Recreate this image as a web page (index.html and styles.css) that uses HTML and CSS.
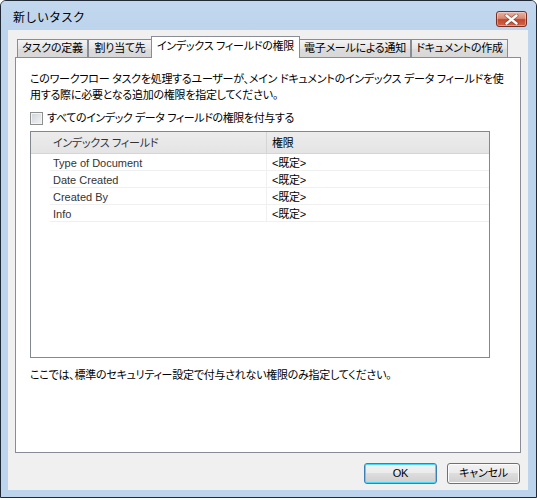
FILE: index.html
```html
<!DOCTYPE html>
<html lang="ja">
<head>
<meta charset="utf-8">
<title>新しいタスク</title>
<link rel="stylesheet" href="styles.css">
</head>
<body>
<div class="window">
  <div class="titlebar">
    <span class="title">新しいタスク</span>
    <div class="close">
      <svg width="15" height="11" viewBox="0 0 15 11">
        <path d="M2.5 1.5 L12.5 9.5 M12.5 1.5 L2.5 9.5" stroke="#6b2a1f" stroke-width="4" stroke-linecap="round" opacity="0.55"/>
        <path d="M2.5 1.5 L12.5 9.5 M12.5 1.5 L2.5 9.5" stroke="#ffffff" stroke-width="2.4" stroke-linecap="round"/>
      </svg>
    </div>
  </div>
  <div class="client">
    <div class="tabs">
      <div class="tab t1">タスクの定義</div>
      <div class="tab t2">割り当て先</div>
      <div class="tab t3 active">インデックス フィールドの権限</div>
      <div class="tab t4">電子メールによる通知</div>
      <div class="tab t5">ドキュメントの作成</div>
    </div>
    <div class="panel">
      <p class="desc">このワークフロー タスクを処理するユーザーが、メイン ドキュメントのインデックス データ フィールドを使<br>用する際に必要となる追加の権限を指定してください。</p>
      <label class="check"><span class="box"></span>すべてのインデック データ フィールドの権限を付与する</label>
      <div class="list">
        <div class="lhead"><span class="h1">インデックス フィールド</span><span class="h2">権限</span></div>
        <div class="row"><span class="c1">Type of Document</span><span class="c2">&lt;既定&gt;</span></div>
        <div class="row"><span class="c1">Date Created</span><span class="c2">&lt;既定&gt;</span></div>
        <div class="row"><span class="c1">Created By</span><span class="c2">&lt;既定&gt;</span></div>
        <div class="row"><span class="c1">Info</span><span class="c2">&lt;既定&gt;</span></div>
      </div>
      <p class="note">ここでは、標準のセキュリティー設定で付与されない権限のみ指定してください。</p>
    </div>
    <div class="buttons">
      <div class="btn default">OK</div>
      <div class="btn">キャンセル</div>
    </div>
  </div>
</div>
</body>
</html>
```

FILE: styles.css
```css
* { box-sizing: border-box; }
html, body { margin: 0; padding: 0; background: #ffffff; }
body {
  font-family: "Liberation Sans", "Noto Sans CJK JP", sans-serif;
  font-size: 11px;
  letter-spacing: -0.25px;
  color: #000;
}
.window {
  width: 537px;
  height: 498px;
  border: 1px solid #1f2a36;
  border-radius: 6px 6px 0 0;
  background: #bcd4ec;
  padding: 0 8px 7px 7px;
  display: flex;
  flex-direction: column;
}
.titlebar {
  height: 29px;
  display: flex;
  align-items: flex-start;
  justify-content: space-between;
  background: linear-gradient(#c3d8ee, #bcd4ec);
  margin: 0 -8px 0 -7px;
  padding: 0 7px 0 7px;
  border-radius: 5px 5px 0 0;
}
.title {
  padding: 9px 0 0 5px;
  line-height: 16px;
  font-size: 12px;
  letter-spacing: 0;
}
.close {
  margin-top: 10px;
  margin-right: 2px;
  width: 31px;
  height: 16px;
  border: 1px solid #7a2e22;
  border-radius: 3px;
  background: linear-gradient(#eab1a3 0%, #d98a74 45%, #c3452c 55%, #d0674c 100%);
  display: flex;
  align-items: center;
  justify-content: center;
  box-shadow: inset 0 0 0 1px rgba(255,255,255,0.35);
}
.close svg { display: block; }
.client {
  flex: 1;
  background: #f0f0f0;
  display: flex;
  flex-direction: column;
  padding: 6px 7px 6px 7px;
}
.tabs {
  display: flex;
  align-items: flex-end;
  height: 21px;
  padding-left: 2px;
  position: relative;
  z-index: 1;
}
.tab {
  height: 18px;
  border: 1px solid #898c95;
  border-bottom: none;
  background: linear-gradient(#f4f4f4, #e4e4e4 50%, #dcdcdc 51%, #d7d7d7);
  text-align: center;
  line-height: 17px;
  white-space: nowrap;
  font-feature-settings: "palt";
}
.t1 { width: 71px; }
.t2 { width: 64px; }
.t3 { width: 149px; margin-left: -1px; }
.t4 { width: 112px; margin-left: -1px; }
.t5 { width: 97px; }
.tab.active {
  height: 22px;
  margin-bottom: -1px;
  background: #ffffff;
  line-height: 19px;
}
.panel {
  flex: 1;
  background: #ffffff;
  border: 1px solid #898c95;
  padding: 13px 14px 0 14px;
  display: flex;
  flex-direction: column;
  align-items: flex-start;
}
.desc {
  margin: 0;
  line-height: 16px;
  white-space: nowrap;
  font-feature-settings: "palt";
}
.check {
  margin-top: 7px;
  display: flex;
  align-items: center;
  height: 16px;
  line-height: 16px;
  white-space: nowrap;
  font-feature-settings: "palt";
  letter-spacing: -0.4px;
}
.box {
  width: 13px;
  height: 13px;
  border: 1px solid #8e8f8f;
  background: linear-gradient(135deg, #cfd3d8, #f4f4f4);
  box-shadow: inset 0 0 0 1px #f4f4f4;
  margin-right: 4px;
}
.list {
  margin-top: 5px;
  width: 460px;
  height: 227px;
  border: 1px solid #828790;
  background: #ffffff;
}
.lhead {
  display: flex;
  height: 22px;
  background: linear-gradient(#ececec, #e4e4e4);
  border-bottom: 1px solid #d5d5d5;
  line-height: 23px;
  font-feature-settings: "palt";
}
.h1 {
  width: 236px;
  padding-left: 22px;
  border-right: 1px solid #d5d5d5;
  color: #333;
}
.h2 { padding-left: 5px; }
.row {
  display: flex;
  height: 17px;
  margin-left: 19px;
  border-bottom: 1px solid #f0f0f0;
  line-height: 18px;
}
.c1 {
  width: 217px;
  padding-left: 3px;
  border-right: 1px solid #f0f0f0;
  color: #333;
  letter-spacing: 0;
}
.c2 { padding-left: 5px; }
.note {
  margin: 9px 0 0 0;
  line-height: 16px;
  white-space: nowrap;
  font-feature-settings: "palt";
}
.buttons {
  display: flex;
  justify-content: flex-end;
  gap: 10px;
  margin-top: 10px;
  padding-right: 1px;
}
.btn {
  width: 73px;
  height: 21px;
  border: 1px solid #707070;
  border-radius: 3px;
  background: linear-gradient(#f2f2f2 0%, #ebebeb 49%, #dddddd 50%, #cfcfcf 100%);
  box-shadow: inset 0 0 0 1px #fcfcfc;
  text-align: center;
  line-height: 19px;
  font-feature-settings: "palt";
}
.btn.default {
  border-color: #3c7fb1;
  box-shadow: inset 0 0 0 1px #48d8fb;
}
```
